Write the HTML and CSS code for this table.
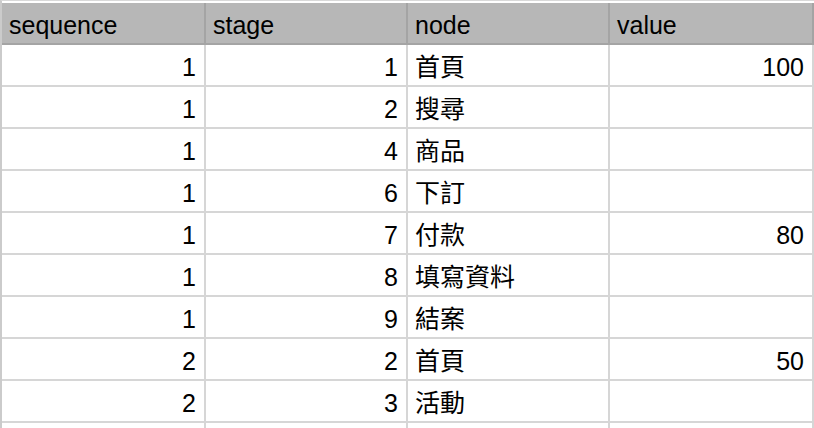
FILE: index.html
```html
<!DOCTYPE html>
<html lang="zh-Hant">
<head>
<meta charset="utf-8">
<title>sheet</title>
<link rel="stylesheet" href="styles.css">
</head>
<body>
<div class="sheet">
  <div class="row head">
    <div class="cell">sequence</div>
    <div class="cell">stage</div>
    <div class="cell">node</div>
    <div class="cell">value</div>
  </div>
  <div class="row"><div class="cell num">1</div><div class="cell num">1</div><div class="cell">首頁</div><div class="cell num">100</div></div>
  <div class="row"><div class="cell num">1</div><div class="cell num">2</div><div class="cell">搜尋</div><div class="cell num"></div></div>
  <div class="row"><div class="cell num">1</div><div class="cell num">4</div><div class="cell">商品</div><div class="cell num"></div></div>
  <div class="row"><div class="cell num">1</div><div class="cell num">6</div><div class="cell">下訂</div><div class="cell num"></div></div>
  <div class="row"><div class="cell num">1</div><div class="cell num">7</div><div class="cell">付款</div><div class="cell num">80</div></div>
  <div class="row"><div class="cell num">1</div><div class="cell num">8</div><div class="cell">填寫資料</div><div class="cell num"></div></div>
  <div class="row"><div class="cell num">1</div><div class="cell num">9</div><div class="cell">結案</div><div class="cell num"></div></div>
  <div class="row"><div class="cell num">2</div><div class="cell num">2</div><div class="cell">首頁</div><div class="cell num">50</div></div>
  <div class="row"><div class="cell num">2</div><div class="cell num">3</div><div class="cell">活動</div><div class="cell num"></div></div>
  <div class="row tail"><div class="cell"></div><div class="cell"></div><div class="cell"></div><div class="cell"></div></div>
</div>
</body>
</html>
```

FILE: styles.css
```css
html, body {
  margin: 0;
  padding: 0;
  background: #ffffff;
}

body {
  width: 814px;
  height: 428px;
  overflow: hidden;
}

.sheet {
  border-top: 1px solid #d9d9d9;
  padding-top: 2px;
  border-left: 2px solid #cbcbcb;
  font-family: "Liberation Sans", Arial, "Noto Sans CJK TC", sans-serif;
  font-size: 25px;
  color: #000000;
}

.row {
  display: grid;
  grid-template-columns: 204px 202px 202px 204px;
  height: 42px;
}

.cell {
  box-sizing: border-box;
  height: 42px;
  padding: 4px 8px 0 7px;
  line-height: 36px;
  border-right: 2px solid #d6d6d6;
  border-bottom: 2px solid #d6d6d6;
  white-space: nowrap;
  overflow: hidden;
}

.num {
  text-align: right;
}

.head .cell {
  background: #b7b7b7;
  border-right-color: #a4a4a4;
  border-bottom-color: #a4a4a4;
}

.tail,
.tail .cell {
  height: 5px;
  border-bottom: 0;
  padding: 0;
}
```
